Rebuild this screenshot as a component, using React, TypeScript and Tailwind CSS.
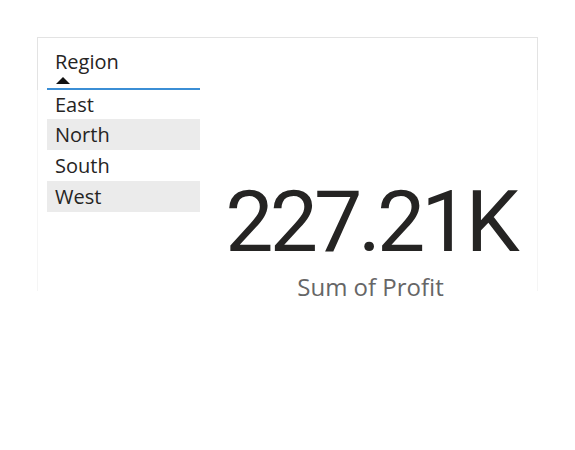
import React from "react";

const items = [
  { name: "East", shade: false, h: "h-[29px]" },
  { name: "North", shade: true, h: "h-[31px]" },
  { name: "South", shade: false, h: "h-[31px]" },
  { name: "West", shade: true, h: "h-[31px]" },
];

export default function App() {
  return (
    <div className="w-[575px] h-[450px] bg-white pt-[37px] pl-[37px]">
      <div className="w-[501px] h-[254px] border-t border-x [border-image:linear-gradient(to_bottom,#e3e3e3_53px,#f5f5f5_53px)_1] flex">
        <div className="w-[162px] pl-[9px] flex flex-col" style={{ fontFamily: '"Open Sans", sans-serif' }}>
          <div className="h-[52px] border-b-2 border-[#3b8ed5] pl-[8px] pt-[10px] flex flex-col">
            <div className="text-[20px] leading-[28px] text-[#252423]">Region</div>
            <svg width="14" height="7" viewBox="0 0 14 7" className="ml-[1px] mt-[1px]">
              <polygon points="7,0 14,7 0,7" fill="#111" />
            </svg>
          </div>
          <div className="flex flex-col">
            {items.map((it) => (
              <div
                key={it.name}
                className={`${it.h} pl-[8px] flex items-center text-[20px] text-[#252423] ${it.shade ? "bg-[#ebebeb]" : "bg-white"}`}
              >
                {it.name}
              </div>
            ))}
          </div>
        </div>
        <div className="flex-1 flex flex-col items-center pt-[141px] pl-[4px]">
          <div
            className="text-[86px] leading-[86px] tracking-[-4px] text-[#252423]"
            style={{ fontFamily: "Roboto, sans-serif" }}
          >
            227.21K
          </div>
          <div
            className="mt-[7px] text-[24px] leading-[30px] text-[#666666]"
            style={{ fontFamily: '"Open Sans", sans-serif' }}
          >
            Sum of Profit
          </div>
        </div>
      </div>
    </div>
  );
}
